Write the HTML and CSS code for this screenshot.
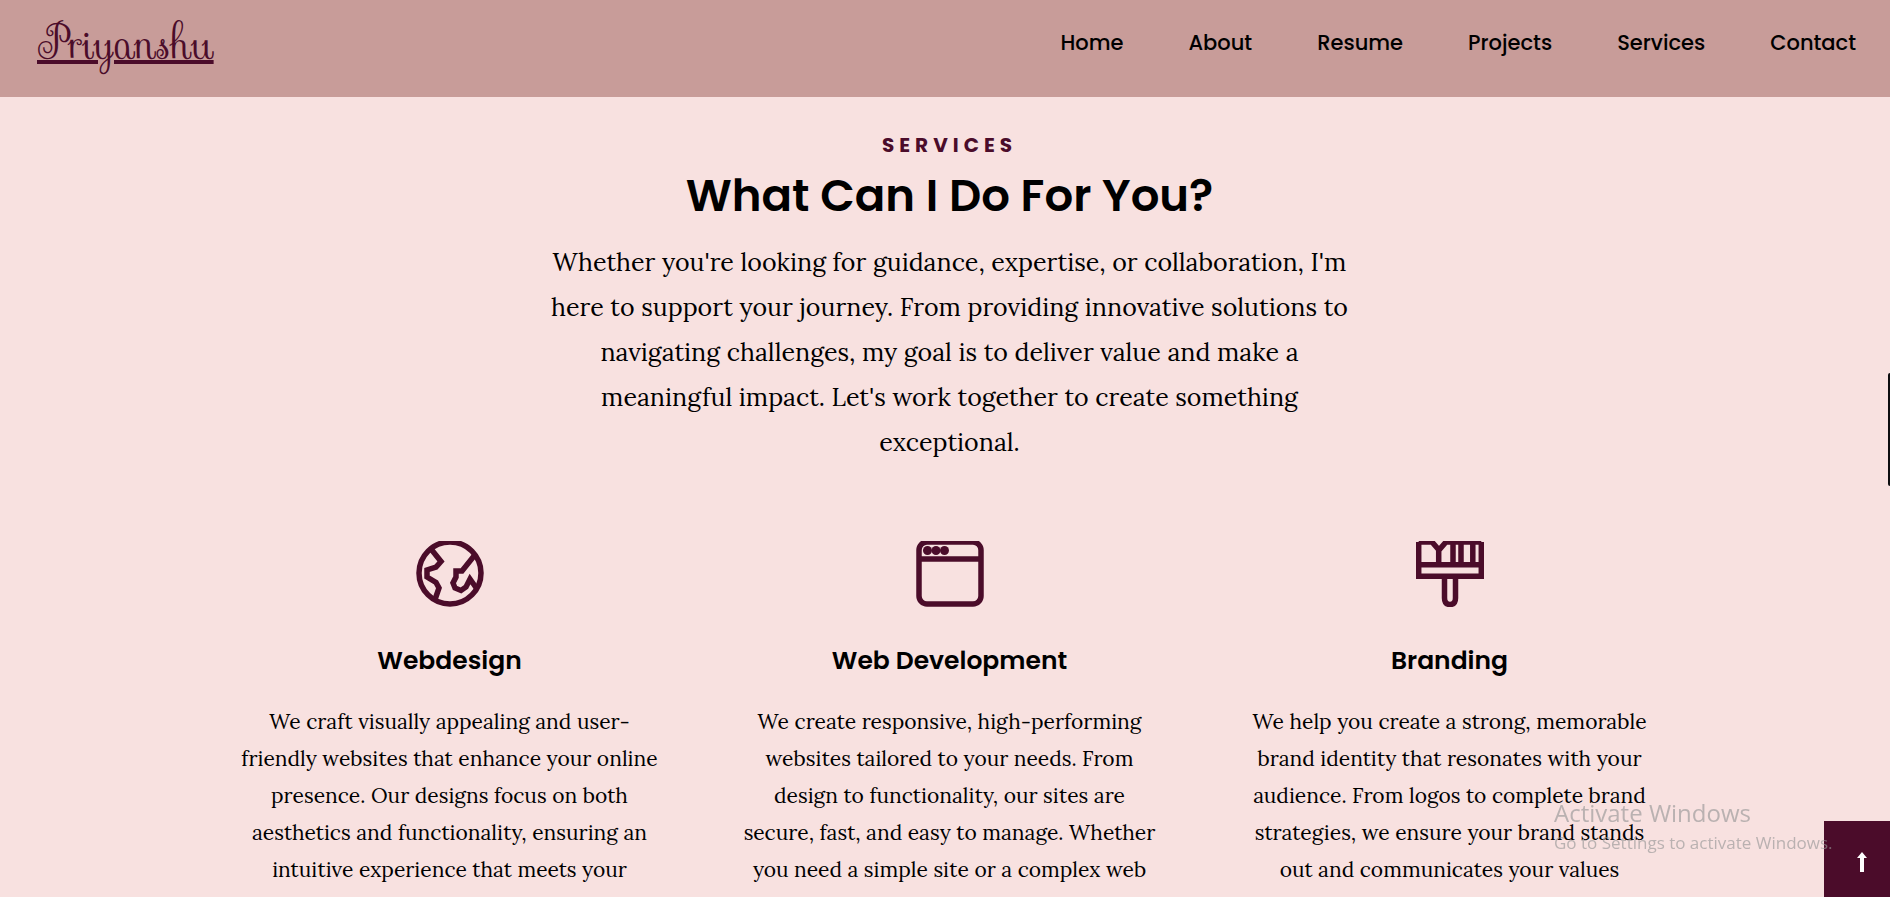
FILE: index.html
```html
<!DOCTYPE html>
<html lang="en">
<head>
<meta charset="utf-8">
<meta name="viewport" content="width=device-width, initial-scale=1">
<title>Priyanshu - Services</title>
<link rel="stylesheet" href="styles.css">
</head>
<body>
<header class="site-header">
  <a class="logo" href="#">Priyanshu</a>
  <nav class="nav">
    <a href="#home">Home</a>
    <a href="#about">About</a>
    <a href="#resume">Resume</a>
    <a href="#projects">Projects</a>
    <a href="#services">Services</a>
    <a href="#contact">Contact</a>
  </nav>
</header>
<main class="services" id="services">
  <div class="intro">
    <p class="eyebrow">SERVICES</p>
    <h1 class="title">What Can I Do For You?</h1>
    <p class="lead">Whether you're looking for guidance, expertise, or collaboration, I'm<br>here to support your journey. From providing innovative solutions to<br>navigating challenges, my goal is to deliver value and make a<br>meaningful impact. Let's work together to create something<br>exceptional.</p>
  </div>
  <div class="cards">
    <article class="card">
      <svg class="icon" viewBox="0 0 68 66" aria-hidden="true">
        <circle cx="34" cy="32" r="31"/>
        <path d="M15 8L25 20.500L20 26L11 29V36L20 41.500L23 47L18.500 60"/>
        <path d="M58 15L46 30H40V36L37 42L39 47L45 49.500L50 46L54 38L61 48"/>
      </svg>
      <h2 class="card-title">Webdesign</h2>
      <p class="card-text">We craft visually appealing and user-<br>friendly websites that enhance your online<br>presence. Our designs focus on both<br>aesthetics and functionality, ensuring an<br>intuitive experience that meets your</p>
    </article>
    <article class="card">
      <svg class="icon" viewBox="0 0 68 66" aria-hidden="true">
        <rect x="3" y="1" width="62" height="62" rx="8"/>
        <path d="M3 18H65"/>
        <g class="solid"><circle cx="11.500" cy="9.500" r="4.500"/><circle cx="20" cy="9.500" r="4.500"/><circle cx="28.500" cy="9.500" r="4.500"/></g>
      </svg>
      <h2 class="card-title">Web Development</h2>
      <p class="card-text">We create responsive, high-performing<br>websites tailored to your needs. From<br>design to functionality, our sites are<br>secure, fast, and easy to manage. Whether<br>you need a simple site or a complex web</p>
    </article>
    <article class="card">
      <svg class="icon" viewBox="0 0 68 66" aria-hidden="true">
        <path d="M2.700 1V35.300H65.300V1M2.700 23.800H65.300M2.700 1H16L23 9L30 1H65.300M22.700 9V24M37 1V24M45 1V24M56.800 1V24"/>
        <path d="M28.500 36V57Q28.500 63.500 34 63.500Q39.500 63.500 39.500 57V36"/>
      </svg>
      <h2 class="card-title">Branding</h2>
      <p class="card-text">We help you create a strong, memorable<br>brand identity that resonates with your<br>audience. From logos to complete brand<br>strategies, we ensure your brand stands<br>out and communicates your values</p>
    </article>
  </div>
</main>
<div class="side-tab"></div>
<button class="to-top" type="button" aria-label="Back to top">
  <svg class="arrow" viewBox="0 0 10 20" aria-hidden="true"><path d="M5 0L10 6H7V20H3V6H0Z"/></svg>
</button>
<aside class="watermark">
  <p class="watermark-title">Activate Windows</p>
  <p class="watermark-text">Go to Settings to activate Windows.</p>
</aside>
</body>
</html>
```
FILE: styles.css
```css
* { box-sizing: border-box; }
html, body { height: 100%; }
body {
  margin: 0;
  background: #f8e1e0;
  color: #000;
  font-family: Poppins, Inter, sans-serif;
  overflow: hidden;
}
h1, h2, p { margin: 0; }

.site-header {
  display: flex;
  justify-content: space-between;
  align-items: flex-start;
  padding: 16px 34px 17px 37px;
  background: #c89c99;
}
.logo {
  color: #4b0c2a;
  font-family: "Sevillana", "Rouge Script", "Petit Formal Script", "Great Vibes", "Dancing Script", "Liberation Serif", serif;
  font-size: 44px;
  line-height: 56px;
  padding-bottom: 8px;
  text-decoration: underline 4px;
}
.nav { display: flex; gap: 65px; }
.nav a {
  color: #000;
  font-size: 21px;
  font-weight: 500;
  line-height: 53px;
  text-decoration: none;
}

.services { padding: 32px 0 0 9px; text-align: center; }
.eyebrow {
  color: #4b0c2a;
  font-size: 20px;
  font-weight: 700;
  line-height: 32px;
  letter-spacing: 5px;
}
.title { font-size: 45px; font-weight: 600; line-height: 70px; }
.lead {
  margin-top: 9px;
  font: 25px/45px Lora, "Liberation Serif", serif;
}
.cards {
  display: grid;
  grid-template-columns: repeat(3, minmax(0, 500px));
  justify-content: center;
  margin-top: 76px;
}
.icon {
  display: block;
  width: 68px;
  height: 66px;
  margin: 0 auto;
  fill: none;
  stroke: #4b0c2a;
  stroke-width: 5.500;
}
.solid { fill: #4b0c2a; stroke: none; }
.card-title {
  margin-top: 34px;
  font-size: 25px;
  font-weight: 600;
  line-height: 40px;
}
.card-text {
  margin-top: 22px;
  font: 21px/37px Lora, "Liberation Serif", serif;
}

.side-tab {
  position: fixed;
  top: 373px;
  right: 0;
  width: 2px;
  height: 113px;
  background: #0d0d10;
  border-radius: 2px 0 0 2px;
}
.to-top {
  position: fixed;
  right: 0;
  bottom: 0;
  display: flex;
  align-items: center;
  justify-content: center;
  width: 66px;
  height: 76px;
  padding: 6px 0 0 9px;
  border: 0;
  background: #4b0c2a;
}
.arrow { width: 10px; height: 20px; fill: #fff; }
.watermark {
  position: fixed;
  right: 52px;
  bottom: 40px;
  width: 284px;
  color: rgba(150, 150, 150, 0.64);
  font-family: "Segoe UI", "Open Sans", sans-serif;
  white-space: nowrap;
}
.watermark-title { font-size: 24px; line-height: 32px; }
.watermark-text { font-size: 17px; line-height: 28px; }
```
